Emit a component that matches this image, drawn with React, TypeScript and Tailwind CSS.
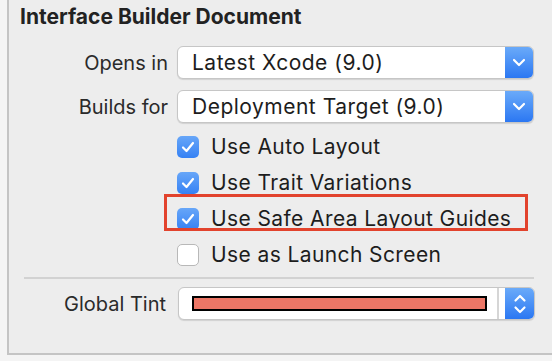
import React from "react";

function Chevron() {
  return (
    <svg width="14" height="9" viewBox="0 0 14 9" fill="none">
      <path d="M2 2l5 5 5-5" stroke="white" strokeWidth="2.2" strokeLinecap="round" strokeLinejoin="round" />
    </svg>
  );
}

function Stepper() {
  return (
    <svg width="14" height="24" viewBox="0 0 14 24" fill="none">
      <path d="M2.5 8.5l4.5-4.5 4.5 4.5" stroke="white" strokeWidth="2.2" strokeLinecap="round" strokeLinejoin="round" />
      <path d="M2.5 15.5l4.5 4.5 4.5-4.5" stroke="white" strokeWidth="2.2" strokeLinecap="round" strokeLinejoin="round" />
    </svg>
  );
}

function Popup({ value }: { value: string }) {
  return (
    <div className="flex h-[33px] w-[357px] rounded-[6px] border border-[#c6c6c6] bg-white shadow-[0_1px_1px_rgba(0,0,0,0.12)] overflow-hidden">
      <div className="flex-1 flex items-center pl-[14px] text-[21px] text-[#1d1d1d] tracking-[0.5px]">
        {value}
      </div>
      <div className="w-[28px] flex items-center justify-center bg-gradient-to-b from-[#6aaaf9] to-[#2b77f2]">
        <Chevron />
      </div>
    </div>
  );
}

function Check({ checked, label }: { checked: boolean; label: string }) {
  return (
    <div className="flex items-center h-[36px] gap-[12px]">
      {checked ? (
        <div className="w-[22px] h-[22px] rounded-[5px] bg-gradient-to-b from-[#67a6f8] to-[#3581f4] flex items-center justify-center">
          <svg width="14" height="12" viewBox="0 0 14 12" fill="none">
            <path d="M2 6.5l3.5 3.5L12 2" stroke="white" strokeWidth="2.2" strokeLinecap="round" strokeLinejoin="round" />
          </svg>
        </div>
      ) : (
        <div className="w-[22px] h-[22px] rounded-[5px] bg-white border border-[#b8b8b8]" />
      )}
      <span className="text-[21px] text-[#1d1d1d] tracking-[0.4px]">{label}</span>
    </div>
  );
}

export default function App() {
  return (
    <div className="w-[552px] h-[361px] bg-[#f4f4f4] overflow-hidden" style={{ fontFamily: "Inter, 'Liberation Sans', sans-serif" }}>
      <div className="ml-[7px] w-[545px] h-[355px] border-l-2 border-b-2 border-[#c4c4c4] bg-[#ededed] pl-[11px] pt-[4px]">
        <div className="text-[21px] font-bold text-[#222] leading-[26px]">Interface Builder Document</div>

        <div className="mt-[16px] flex flex-col gap-[11px] -ml-[2px]">
          <div className="flex items-center">
            <div className="w-[150px] text-right text-[20px] text-[#2a2a2a]">Opens in</div>
            <div className="ml-[9px]">
              <Popup value="Latest Xcode (9.0)" />
            </div>
          </div>
          <div className="flex items-center">
            <div className="w-[150px] text-right text-[20px] text-[#2a2a2a]">Builds for</div>
            <div className="ml-[9px]">
              <Popup value="Deployment Target (9.0)" />
            </div>
          </div>
        </div>

        <div className="relative mt-[6px] ml-[157px] flex flex-col">
          <Check checked label="Use Auto Layout" />
          <Check checked label="Use Trait Variations" />
          <Check checked label="Use Safe Area Layout Guides" />
          <Check checked={false} label="Use as Launch Screen" />
          <div className="absolute left-[-13px] top-[65px] w-[364px] h-[37px] border-[3px] border-[#e2432d]" />
        </div>

        <div className="mt-[4px] ml-[4px] w-[510px] h-[2px] bg-[#d2d2d2]" />

        <div className="mt-[8px] flex items-center -ml-[2px]">
          <div className="w-[148px] text-right text-[20px] text-[#2a2a2a]">Global Tint</div>
          <div className="ml-[12px] flex h-[33px] w-[357px] rounded-[6px] border border-[#c6c6c6] bg-white shadow-[0_1px_1px_rgba(0,0,0,0.12)] overflow-hidden">
            <div className="flex-1 flex items-center pl-[13px] pr-[10px]">
              <div className="w-full h-[15px] border-2 border-black bg-[#ec7666]" />
            </div>
            <div className="w-[2px] bg-[#d6d6d6]" />
            <div className="w-[6px]" />
            <div className="w-[29px] flex items-center justify-center bg-gradient-to-b from-[#6aaaf9] to-[#2b77f2]">
              <Stepper />
            </div>
          </div>
        </div>
      </div>
    </div>
  );
}
